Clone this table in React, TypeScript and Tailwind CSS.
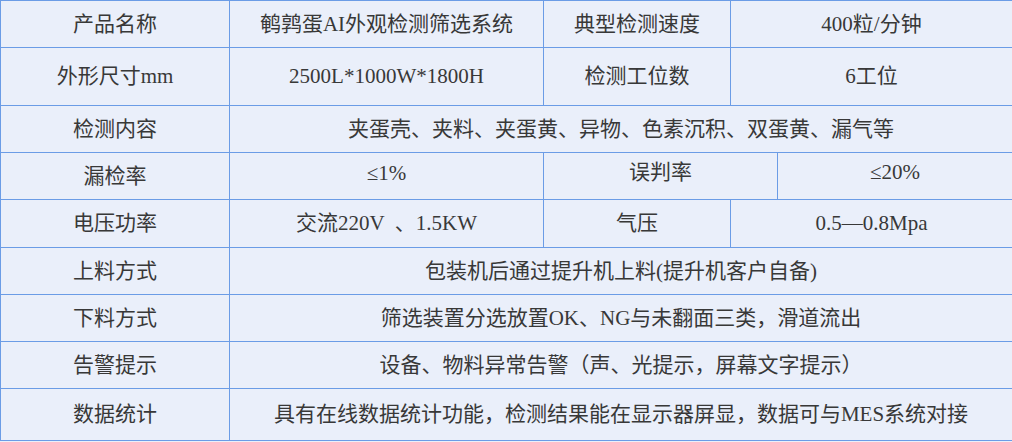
const FONT = 'font-["Liberation_Serif","Noto_Sans_CJK_SC",serif]'

type Cell = { text: string; span?: number; cls?: string }

const ROWS: { h: string; cells: Cell[] }[] = [
  { h: 'h-[47px]', cells: [{ text: '产品名称' }, { text: '鹌鹑蛋AI外观检测筛选系统' }, { text: '典型检测速度' }, { text: '400粒/分钟', span: 2 }] },
  { h: 'h-[58px]', cells: [{ text: '外形尺寸mm' }, { text: '2500L*1000W*1800H' }, { text: '检测工位数' }, { text: '6工位', span: 2 }] },
  { h: 'h-[47px]', cells: [{ text: '检测内容' }, { text: '夹蛋壳、夹料、夹蛋黄、异物、色素沉积、双蛋黄、漏气等', span: 4 }] },
  { h: 'h-[47px]', cells: [{ text: '漏检率' }, { text: '≤1%', cls: 'pb-[6px]' }, { text: '误判率', span: 2, cls: 'pb-[8px]' }, { text: '≤20%', cls: 'pb-[8px]' }] },
  { h: 'h-[48px]', cells: [{ text: '电压功率' }, { text: '交流220V  、1.5KW' }, { text: '气压' }, { text: '0.5—0.8Mpa', span: 2 }] },
  { h: 'h-[47px]', cells: [{ text: '上料方式' }, { text: '包装机后通过提升机上料(提升机客户自备)', span: 4 }] },
  { h: 'h-[47px]', cells: [{ text: '下料方式' }, { text: '筛选装置分选放置OK、NG与未翻面三类，滑道流出', span: 4 }] },
  { h: 'h-[47px]', cells: [{ text: '告警提示' }, { text: '设备、物料异常告警（声、光提示，屏幕文字提示）', span: 4 }] },
  { h: 'h-[52px]', cells: [{ text: '数据统计' }, { text: '具有在线数据统计功能，检测结果能在显示器屏显，数据可与MES系统对接', span: 4 }] },
]

export default function App() {
  return (
    <div className={`w-[1012px] h-[442px] overflow-hidden bg-[#eaeffa] ${FONT}`}>
      <table className="w-[1012px] table-fixed border-collapse text-[21px] leading-none text-[#383838]">
        <colgroup>
          <col className="w-[229px]" />
          <col className="w-[314px]" />
          <col className="w-[187px]" />
          <col className="w-[47px]" />
          <col className="w-[235px]" />
        </colgroup>
        <tbody>
          {ROWS.map((r, i) => (
            <tr key={i} className={r.h}>
              {r.cells.map((c, j) => (
                <td
                  key={j}
                  colSpan={c.span}
                  className={`border border-[#6b9ce6] p-0 text-center align-middle whitespace-pre ${c.cls ?? ''}`}
                >
                  {c.text}
                </td>
              ))}
            </tr>
          ))}
        </tbody>
      </table>
    </div>
  )
}
